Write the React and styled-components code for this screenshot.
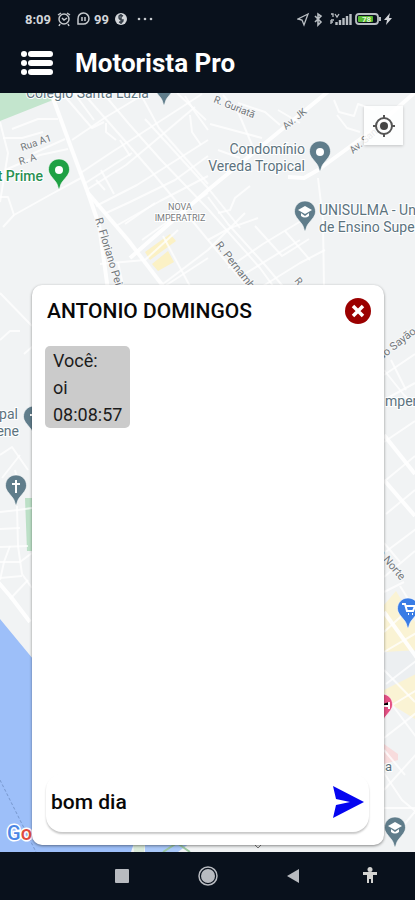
import React, { useState } from "react";
import styled, { createGlobalStyle } from "styled-components";

const GlobalStyle = createGlobalStyle`
  * { box-sizing: border-box; }
  body { margin: 0; font-family: Roboto, "Liberation Sans", sans-serif; background: #09111c; }
  button { border: 0; padding: 0; background: none; font: inherit; cursor: pointer; }
`;

const Screen = styled.div`
  min-height: 100vh;
  display: flex;
  flex-direction: column;
`;
const StatusBar = styled.div`
  height: 38px;
  padding: 0 20px 0 25px;
  display: flex;
  align-items: center;
  justify-content: space-between;
  background: #09111c;
  color: #d3d6da;
  font-size: 13px;
  font-weight: 700;
`;
const StatusGroup = styled.div`
  display: flex;
  align-items: center;
  gap: ${(p) => p.$gap}px;
`;
const AppBar = styled.header`
  height: 55px;
  padding: 0 21px 5px;
  display: flex;
  align-items: center;
  gap: 22px;
  background: #09111c;
  color: #fff;
`;
const IconButton = styled.button`
  display: flex;
  flex: none;
`;
const AppTitle = styled.h1`
  margin: 0;
  font-size: 26px;
  line-height: 32px;
  font-weight: 700;
`;
const MapArea = styled.main`
  position: relative;
  flex: 1;
  display: flex;
  flex-direction: column;
  padding: 192px 31px 7px 32px;
  background: #f1f3f4;
  overflow: hidden;
`;
const MapCanvas = styled.svg`
  position: absolute;
  inset: 0;
  width: 100%;
  height: 100%;
  font-family: Roboto, sans-serif;
`;
const LocateButton = styled.button`
  position: absolute;
  top: 13px;
  right: 12px;
  width: 39px;
  height: 39px;
  display: grid;
  place-items: center;
  background: rgba(255, 255, 255, 0.85);
  box-shadow: 0 1px 3px rgba(0, 0, 0, 0.2);
`;
const ChatCard = styled.section`
  position: relative;
  flex: 1;
  display: flex;
  flex-direction: column;
  padding: 10px 13px 13px;
  border-radius: 10px;
  background: #fff;
  box-shadow: 0 1px 3px rgba(0, 0, 0, 0.45);
`;
const ChatHeader = styled.div`
  height: 32px;
  padding-left: 2px;
  display: flex;
  align-items: center;
  justify-content: space-between;
`;
const ChatTitle = styled.h2`
  margin: 0;
  font-size: 21px;
  line-height: 28px;
  font-weight: 500;
  color: #080808;
`;
const Messages = styled.div`
  flex: 1;
  padding-top: 19px;
`;
const Bubble = styled.div`
  width: fit-content;
  padding: 1px 8px 0;
  border-radius: 5px;
  background: #cbcbcb;
  color: #1c1c1c;
  font-size: 18px;
  line-height: 27px;
`;
const BubbleLine = styled.p`
  margin: 0;
`;
const Composer = styled.form`
  height: 58px;
  margin: 0 2px 0 1px;
  padding: 0 5px 2px;
  display: flex;
  align-items: center;
  border-radius: 16px;
  background: #fff;
  box-shadow: 0 2px 2px rgba(0, 0, 0, 0.22);
`;
const MessageInput = styled.input`
  flex: 1;
  min-width: 0;
  padding: 0;
  border: 0;
  outline: 0;
  background: transparent;
  color: #080808;
  font: 500 21px/28px Roboto, sans-serif;
`;
const NavBar = styled.nav`
  height: 48px;
  padding: 0 35px 0 111px;
  display: flex;
  align-items: center;
  justify-content: space-between;
  background: #09111c;
`;
const NavGroup = styled.div`
  display: flex;
  align-items: center;
  gap: 64px;
`;

const GRAY = "#607d8b";

const avenues = [
  "M50 90L72 150L88 193L128 240L166 290",
  "M88 193L99 225L108 290",
  "M330 90L275 135L208 190L130 258",
  "M420 88L370 132L318 170L304 178L288 177",
  "M384 435L415 474",
  "M384 480L415 516",
  "M384 612L420 662",
  "M-2 582L11 597L30 622",
];

const streets = [
  "M62 93L92 128L104 122", "M74 93L94 120", "M83 93L126 142L152 172L208 240L250 290",
  "M103 93L129 124L161 160L208 209L260 268L276 290", "M140 93L159 128L208 184",
  "M145 119L208 188L240 228", "M177 93L206 120", "M185 96L195 112L208 130",
  "M72 140L106 117L146 93", "M79 174L112 152L134 138L202 94", "M84 184L132 153",
  "M88 189L126 165L150 145L195 107", "M96 206L137 185L208 140", "M104 214L130 202L175 180L208 156",
  "M116 226L160 201L208 176", "M125 224L155 203", "M142 240L208 193",
  "M155 290L208 250L245 213", "M165 286L208 258", "M100 264L145 260L178 230",
  "M118 262L124 290", "M96 180L105 190", "M101 170L114 194",
  "M106 123L106 132L116 140", "M120 140L130 156", "M163 236L192 290",
  "M190 115L192 132L201 145", "M3 138L22 138L43 132", "M0 122L8 153L0 202",
  "M12 129L38 119L58 119", "M32 154L65 139", "M5 170L40 155L68 149",
  "M0 197L8 197L14 215L48 196L81 178", "M14 215L3 227",
  "M238 103L265 112L280 125", "M210 124L262 138", "M223 95L239 114L252 145",
  "M278 110L300 123", "M334 100L339 112L354 116L358 104L375 110", "M337 115L347 128L360 132",
  "M218 150L240 158", "M318 178L323 220L324 290", "M218 213L230 210L235 198L250 186",
  "M208 197L228 224L265 265L286 290", "M208 240L230 228L258 218", "M228 268L263 244L306 218",
  "M243 275L300 240", "M255 226L282 256L309 239", "M285 231L310 260", "M263 286L300 263L325 250",
  "M0 293L32 326", "M24 354L33 346", "M0 340L10 331L20 331", "M384 370L404 395L420 410",
  "M384 375L415 354", "M384 400L415 383", "M391 360L406 390", "M384 442L415 421",
  "M386 480L415 456", "M386 514L415 490", "M384 553L420 526", "M400 586L420 618",
  "M384 543L400 562", "M384 577L415 551", "M384 592L404 582", "M384 632L408 610",
  "M384 652L418 632", "M386 684L420 658", "M384 710L420 688", "M384 738L420 710",
  "M384 670L415 702", "M384 694L420 742", "M384 773L402 800L420 815", "M384 790L420 750",
  "M384 750L405 775", "M384 808L415 808", "M398 832L418 808",
  "M0 512L18 510L32 508", "M17 506L18 546L22 574L32 588", "M0 529L20 528",
  "M0 547L28 546", "M0 562L20 562L32 553", "M0 578L22 576", "M10 599L28 580",
  "M10 546L4 562L0 580", "M0 455L12 447L28 470", "M2 478L20 455", "M15 470L18 482",
];

function Pin({ x, y, color = GRAY, children }) {
  return (
    <g transform={`translate(${x} ${y})`}>
      <path
        d="M0-11C-6-11-10.500-6.500-10.500-.500C-10.500 4-7 7-4 11C-1 14-1 19 0 19C1 19 1 14 4 11C7 7 10.500 4 10.500-.500C10.500-6.500 6-11 0-11Z"
        fill={color}
        stroke="#fff"
        strokeOpacity=".6"
      />
      {children}
    </g>
  );
}

const Cap = () => (
  <path d="M0-6L-7-2L0 2L7-2ZM-4 1V4Q0 7 4 4V1L0 4Z" fill="#fff" />
);
const Cross = () => <path d="M0-6V7M-4-2H4" stroke="#fff" strokeWidth="2" />;

function StreetLabel({ x, y, angle, size = 10, children }) {
  return (
    <text transform={`translate(${x} ${y}) rotate(${angle})`} fontSize={size} fill="#72777b" stroke="#f7f8f9" strokeWidth="2" paintOrder="stroke">
      {children}
    </text>
  );
}
function PlaceLabel({ x, y, anchor = "start", color = "#5c737e", size = 14, weight = 400, children }) {
  return (
    <text x={x} y={y} textAnchor={anchor} fontSize={size} fontWeight={weight} fill={color} stroke="#fff" strokeWidth="2" paintOrder="stroke">
      {children}
    </text>
  );
}

function CityMap() {
  return (
    <MapCanvas viewBox="0 93 415 759" preserveAspectRatio="xMidYMid slice" role="img" aria-label="Mapa">
      <path d="M0 93H415V290H300L0 300Z" fill="#f1f3f4" />
      <path d="M0 93H55L53 100L0 121Z" fill="#c3e5cd" />
      <path d="M145 252L170 234L176 241L150 260ZM152 264L168 251L174 262L158 271Z" fill="#fbf1c5" />
      <path d="M384 605L396 591L420 630V722L384 700Z" fill="#faf3d4" />
      <path d="M384 652L420 650V672L384 690Z" fill="#eceff1" />
      <path d="M384 744L398 754V760L384 764Z" fill="#f8dcdd" />
      <path d="M25 498H33V551H27Z" fill="#bce0c7" />
      <path d="M0 619L33 659V840H135L131 852H0Z" fill="#9dbff9" />
      <path d="M133 843H145L144 852H134ZM165 852L178 843L190 852Z" fill="#d9ead9" />
      <path d="M145 852H415V843H145Z" fill="#f1f3f4" />
      <path d="M145 843H190L178 852H145Z" fill="#a9c8f9" />
      <path d="M163 852L177 843L190 852" fill="none" stroke="#9bc7a0" strokeWidth="2" />
      <g fill="none" stroke="#fff" strokeLinejoin="round">
        {streets.map((d) => <path key={d} d={d} strokeWidth="2" strokeOpacity=".75" />)}
        {avenues.map((d) => <path key={d} d={d} strokeWidth="4" strokeOpacity=".9" />)}
      </g>
      <path d="M0 780L25 830L36 852" fill="none" stroke="#7898ce" strokeDasharray="3 2" />

      <PlaceLabel x={26} y={98}>Colégio Santa Luzia</PlaceLabel>
      <Pin x={164} y={86} />
      <StreetLabel x={22} y={151} angle={-19}>Rua A1</StreetLabel>
      <StreetLabel x={20} y={165} angle={-17}>R. A</StreetLabel>
      <PlaceLabel x={43} y={181} anchor="end" color="#299052" weight={500}>t Prime</PlaceLabel>
      <Pin x={59} y={170} color="#1fa144"><circle r="4" fill="#fff" /></Pin>
      <StreetLabel x={95} y={219} angle={73} size={11}>R. Floriano Peixoto</StreetLabel>
      <g fontSize="9" textAnchor="middle" fill="#777b7e" stroke="#fff" strokeWidth="2" paintOrder="stroke">
        <text x="180" y="210">NOVA</text>
        <text x="180" y="221">IMPERATRIZ</text>
      </g>
      <StreetLabel x={213} y={102} angle={22}>R. Guriatã</StreetLabel>
      <StreetLabel x={286} y={130} angle={-39}>Av. JK</StreetLabel>
      <StreetLabel x={353} y={154} angle={-40}>Av. Santos</StreetLabel>
      <StreetLabel x={215} y={245} angle={52} size={11}>R. Pernambuco</StreetLabel>
      <StreetLabel x={294} y={281} angle={50}>R. Pará</StreetLabel>
      <PlaceLabel x={305} y={154} anchor="end">Condomínio</PlaceLabel>
      <PlaceLabel x={305} y={171} anchor="end">Vereda Tropical</PlaceLabel>
      <Pin x={320} y={152}><circle r="4" fill="#fff" /></Pin>
      <PlaceLabel x={319} y={215}>UNISULMA - Un</PlaceLabel>
      <PlaceLabel x={319} y={232}>de Ensino Supe</PlaceLabel>
      <Pin x={305} y={212}><Cap /></Pin>

      <PlaceLabel x={18} y={419} anchor="end">pal</PlaceLabel>
      <PlaceLabel x={19} y={436} anchor="end">ene</PlaceLabel>
      <Pin x={34} y={417}><Cross /></Pin>
      <Pin x={16} y={486}><Cross /></Pin>
      <StreetLabel x={356} y={380} angle={-38} size={11}>Bernardo Sayão</StreetLabel>
      <PlaceLabel x={385} y={406}>mper</PlaceLabel>
      <StreetLabel x={373} y={548} angle={50} size={11}>do Norte</StreetLabel>
      <Pin x={408} y={609} color="#397ce5">
        <path d="M-6-5H-3L-1 2H5L7-3H-2M0 5H1M4 5H5" fill="none" stroke="#fff" strokeWidth="2" />
      </Pin>
      <Pin x={382} y={705} color="#e45184"><path d="M-5 4V-4M-5 1H7V-3M7 4V-2" stroke="#fff" strokeWidth="2" /></Pin>
      <PlaceLabel x={385} y={771} size={13}>a</PlaceLabel>
      <Pin x={395} y={828}><Cap /></Pin>
      <path d="M254 844L258 848L262 844" fill="none" stroke="#777" />
      <text x="7" y="840" fontSize="20" fontWeight="500" stroke="#fff" strokeWidth="3" paintOrder="stroke">
        <tspan fill="#4b87e5">G</tspan><tspan fill="#df4b3f">o</tspan>
      </text>
    </MapCanvas>
  );
}

function LeftStatusIcons() {
  return (
    <svg width="97" height="16" viewBox="0 0 97 16" fill="none" stroke="#c5c9cd" strokeWidth="1.500" aria-hidden="true">
      <circle cx="8" cy="8" r="5" />
      <path d="M2 4L5 2M11 2L14 4M4 13L3 15M12 13L13 15M6 7L8 9L11 7" />
      <path d="M22 13V8A5.500 5.500 0 1 1 27 13ZM26 6V10M29 6V10" />
      <text x="38" y="13" fontSize="13" fontWeight="700" fill="#d3d6da" stroke="none">99</text>
      <circle cx="65" cy="8" r="6" fill="#d3d6da" stroke="none" />
      <path d="M67 5Q63 3 63 6T67 9Q67 12 63 11M65 3V13" stroke="#37404a" />
      <g fill="#c5c9cd" stroke="none"><circle cx="83" cy="8" r="1.300" /><circle cx="89" cy="8" r="1.300" /><circle cx="95" cy="8" r="1.300" /></g>
    </svg>
  );
}

function RightStatusIcons() {
  return (
    <svg width="98" height="16" viewBox="0 0 98 16" fill="none" stroke="#b9bec3" strokeWidth="1.300" aria-hidden="true">
      <path d="M11 3L1 8L5 9L7 14Z" />
      <path d="M18 5L24 11L21 14V3L24 5L18 11" strokeWidth="1.600" />
      <path d="M34 3H36V6M38 3L40 6L42 3M34 9V13M34 9H37M34 11H36" />
      <path d="M39.500 11V14M43 9V14M46.500 7V14M50 5V14M53.500 3V14" strokeWidth="2.400" />
      <rect x="59" y="3" width="22" height="10" rx="3" strokeWidth="1.800" />
      <path d="M83 6V10" strokeWidth="2" />
      <rect x="61" y="5" width="15" height="6" rx="1" fill="#55b832" stroke="none" />
      <text x="65" y="11" fontSize="8" fontWeight="700" fill="#e7f6d8" stroke="none">78</text>
      <path d="M93 2L87 9H90L89 14L95 7H92Z" fill="#d3d6da" stroke="none" />
    </svg>
  );
}

export default function App() {
  const [message, setMessage] = useState("bom dia");
  return (
    <Screen>
      <GlobalStyle />
      <StatusBar>
        <StatusGroup $gap={5}>
          <span>8:09</span>
          <LeftStatusIcons />
        </StatusGroup>
        <RightStatusIcons />
      </StatusBar>
      <AppBar>
        <IconButton aria-label="Menu">
          <svg width="32" height="26" viewBox="0 0 32 26" fill="#fff">
            {[4, 13, 22].map((y) => (
              <g key={y}><circle cx="3" cy={y} r="3" /><rect x="7" y={y - 3} width="25" height="6" rx="3" /></g>
            ))}
          </svg>
        </IconButton>
        <AppTitle>Motorista Pro</AppTitle>
      </AppBar>
      <MapArea>
        <CityMap />
        <LocateButton aria-label="Minha localização">
          <svg width="22" height="22" viewBox="0 0 22 22" fill="none" stroke="#555" strokeWidth="2">
            <circle cx="11" cy="11" r="8" />
            <circle cx="11" cy="11" r="4" fill="#444" stroke="none" />
            <path d="M11 0V4M11 18V22M0 11H4M18 11H22" />
          </svg>
        </LocateButton>
        <ChatCard>
          <ChatHeader>
            <ChatTitle>ANTONIO DOMINGOS</ChatTitle>
            <IconButton aria-label="Fechar">
              <svg width="26" height="26" viewBox="0 0 26 26">
                <circle cx="13" cy="13" r="13" fill="#9b0000" />
                <path d="M8 8L18 18M18 8L8 18" stroke="#fff" strokeWidth="3.500" />
              </svg>
            </IconButton>
          </ChatHeader>
          <Messages>
            <Bubble>
              <BubbleLine>Você:</BubbleLine>
              <BubbleLine>oi</BubbleLine>
              <BubbleLine>08:08:57</BubbleLine>
            </Bubble>
          </Messages>
          <Composer onSubmit={(e) => e.preventDefault()}>
            <MessageInput aria-label="Mensagem" value={message} onChange={(e) => setMessage(e.target.value)} />
            <IconButton type="submit" aria-label="Enviar">
              <svg width="32" height="32" viewBox="0 0 32 32"><path d="M1 0L32 16L1 32L4 19L18 16L4 13Z" fill="#0505f0" /></svg>
            </IconButton>
          </Composer>
        </ChatCard>
      </MapArea>
      <NavBar>
        <NavGroup>
          <IconButton aria-label="Recentes">
            <svg width="22" height="22" viewBox="0 0 22 22"><rect x="4" y="4" width="14" height="14" rx="1" fill="#b8bbc0" /></svg>
          </IconButton>
          <IconButton aria-label="Início">
            <svg width="22" height="22" viewBox="0 0 22 22"><circle cx="11" cy="11" r="9" fill="none" stroke="#b8bbc0" strokeWidth="1.500" /><circle cx="11" cy="11" r="7" fill="#b8bbc0" /></svg>
          </IconButton>
          <IconButton aria-label="Voltar">
            <svg width="22" height="22" viewBox="0 0 22 22"><path d="M4 11L16 4V18Z" fill="#b8bbc0" /></svg>
          </IconButton>
        </NavGroup>
        <IconButton aria-label="Acessibilidade">
          <svg width="20" height="22" viewBox="0 0 20 22" fill="#d4d4d2"><circle cx="10" cy="4.500" r="2.500" /><path d="M3 7H17V10H13V18H11V14H9V18H7V10H3Z" /></svg>
        </IconButton>
      </NavBar>
    </Screen>
  );
}
